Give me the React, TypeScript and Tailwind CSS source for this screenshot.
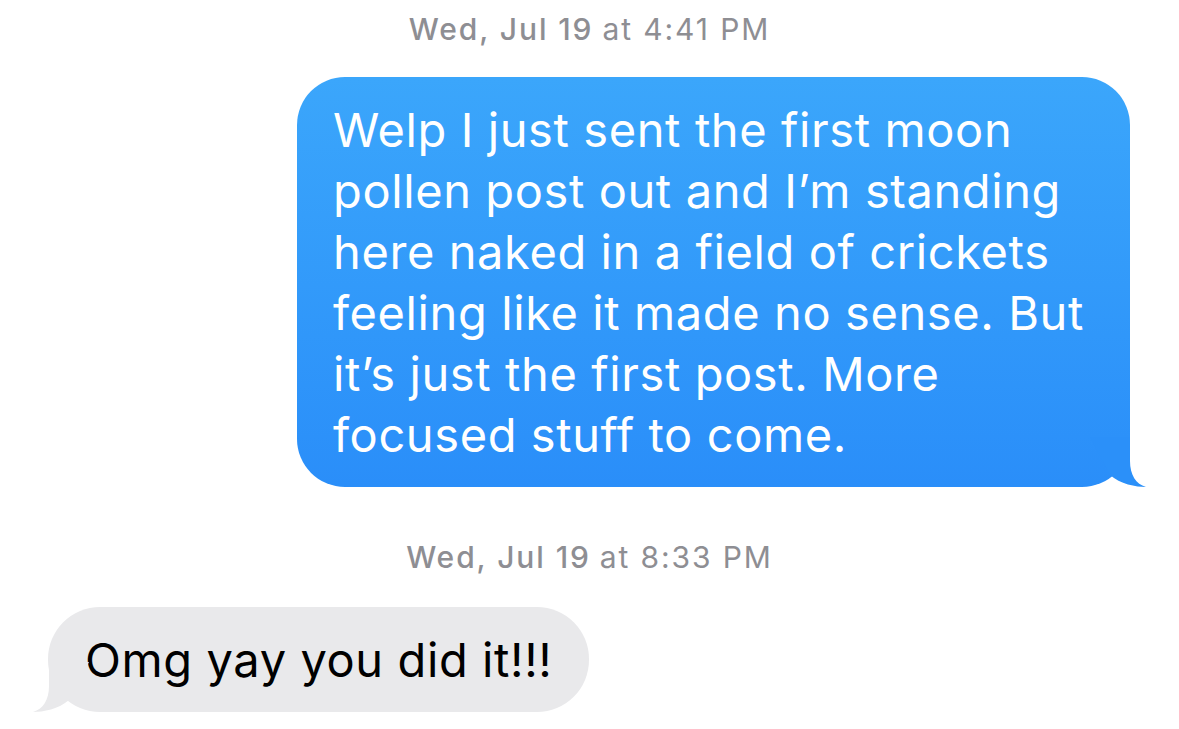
/**
 * @file Message thread screenshot
 */

const FONT = "font-['Inter','Noto_Sans',sans-serif]";

/**
 * Timestamp row
 */
const Stamp: React.FC<{day: string; time: string; className?: string}> = ({
  day,
  time,
  className,
}) => (
  <div
    className={`flex justify-center text-[30px] leading-[36px] tracking-[1.9px] text-[#8e8e93] ${className ?? ""}`}
  >
    <span className="font-medium">{day}</span>
    <span className="ml-[9px]">{time}</span>
  </div>
);

/**
 * Tail of an outgoing bubble (bottom right)
 */
const SentTail: React.FC = () => (
  <svg
    className="absolute right-[-16px] bottom-0"
    width="56"
    height="50"
    viewBox="0 0 56 50"
  >
    <path
      d="M40 0 L40 24 C40 38 46 47 56 50 C46 50 30 47 20 38 L0 0 Z"
      fill="#2b90f9"
    />
  </svg>
);

/**
 * Tail of an incoming bubble (bottom left)
 */
const ReceivedTail: React.FC = () => (
  <svg
    className="absolute left-[-15px] bottom-0 -scale-x-100"
    width="56"
    height="50"
    viewBox="0 0 56 50"
  >
    <path
      d="M40 0 L40 24 C40 38 46 47 56 50 C46 50 30 47 20 38 L0 0 Z"
      fill="#e9e9eb"
    />
  </svg>
);

const sentLines = [
  "Welp I just sent the first moon",
  "pollen post out and I\u2019m standing",
  "here naked in a field of crickets",
  "feeling like it made no sense. But",
  "it\u2019s just the first post. More",
  "focused stuff to come.",
];

export default function App() {
  return (
    <div className={`w-[1179px] h-[729px] bg-white overflow-hidden flex flex-col ${FONT}`}>
      <Stamp day="Wed, Jul 19" time="at 4:41 PM" className="mt-[11px]" />

      <div className="flex justify-end pr-[49px] mt-[30px]">
        <div className="relative w-[833px] rounded-[48px] bg-gradient-to-b from-[#3ba6fb] to-[#2a8ef9] px-[36px] py-[22px] text-white text-[47px] leading-[61px] tracking-[0.6px]">
          {sentLines.map(line => (
            <div key={line} className="whitespace-nowrap">
              {line}
            </div>
          ))}
          <SentTail />
        </div>
      </div>

      <Stamp day="Wed, Jul 19" time="at 8:33 PM" className="mt-[52px]" />

      <div className="flex justify-start pl-[48px] mt-[32px]">
        <div className="relative rounded-[52px] bg-[#e9e9eb] px-[37px] py-[22px] text-black text-[47px] leading-[61px] tracking-[0.6px]">
          <div className="whitespace-nowrap">Omg yay you did it!!!</div>
          <ReceivedTail />
        </div>
      </div>
    </div>
  );
}
